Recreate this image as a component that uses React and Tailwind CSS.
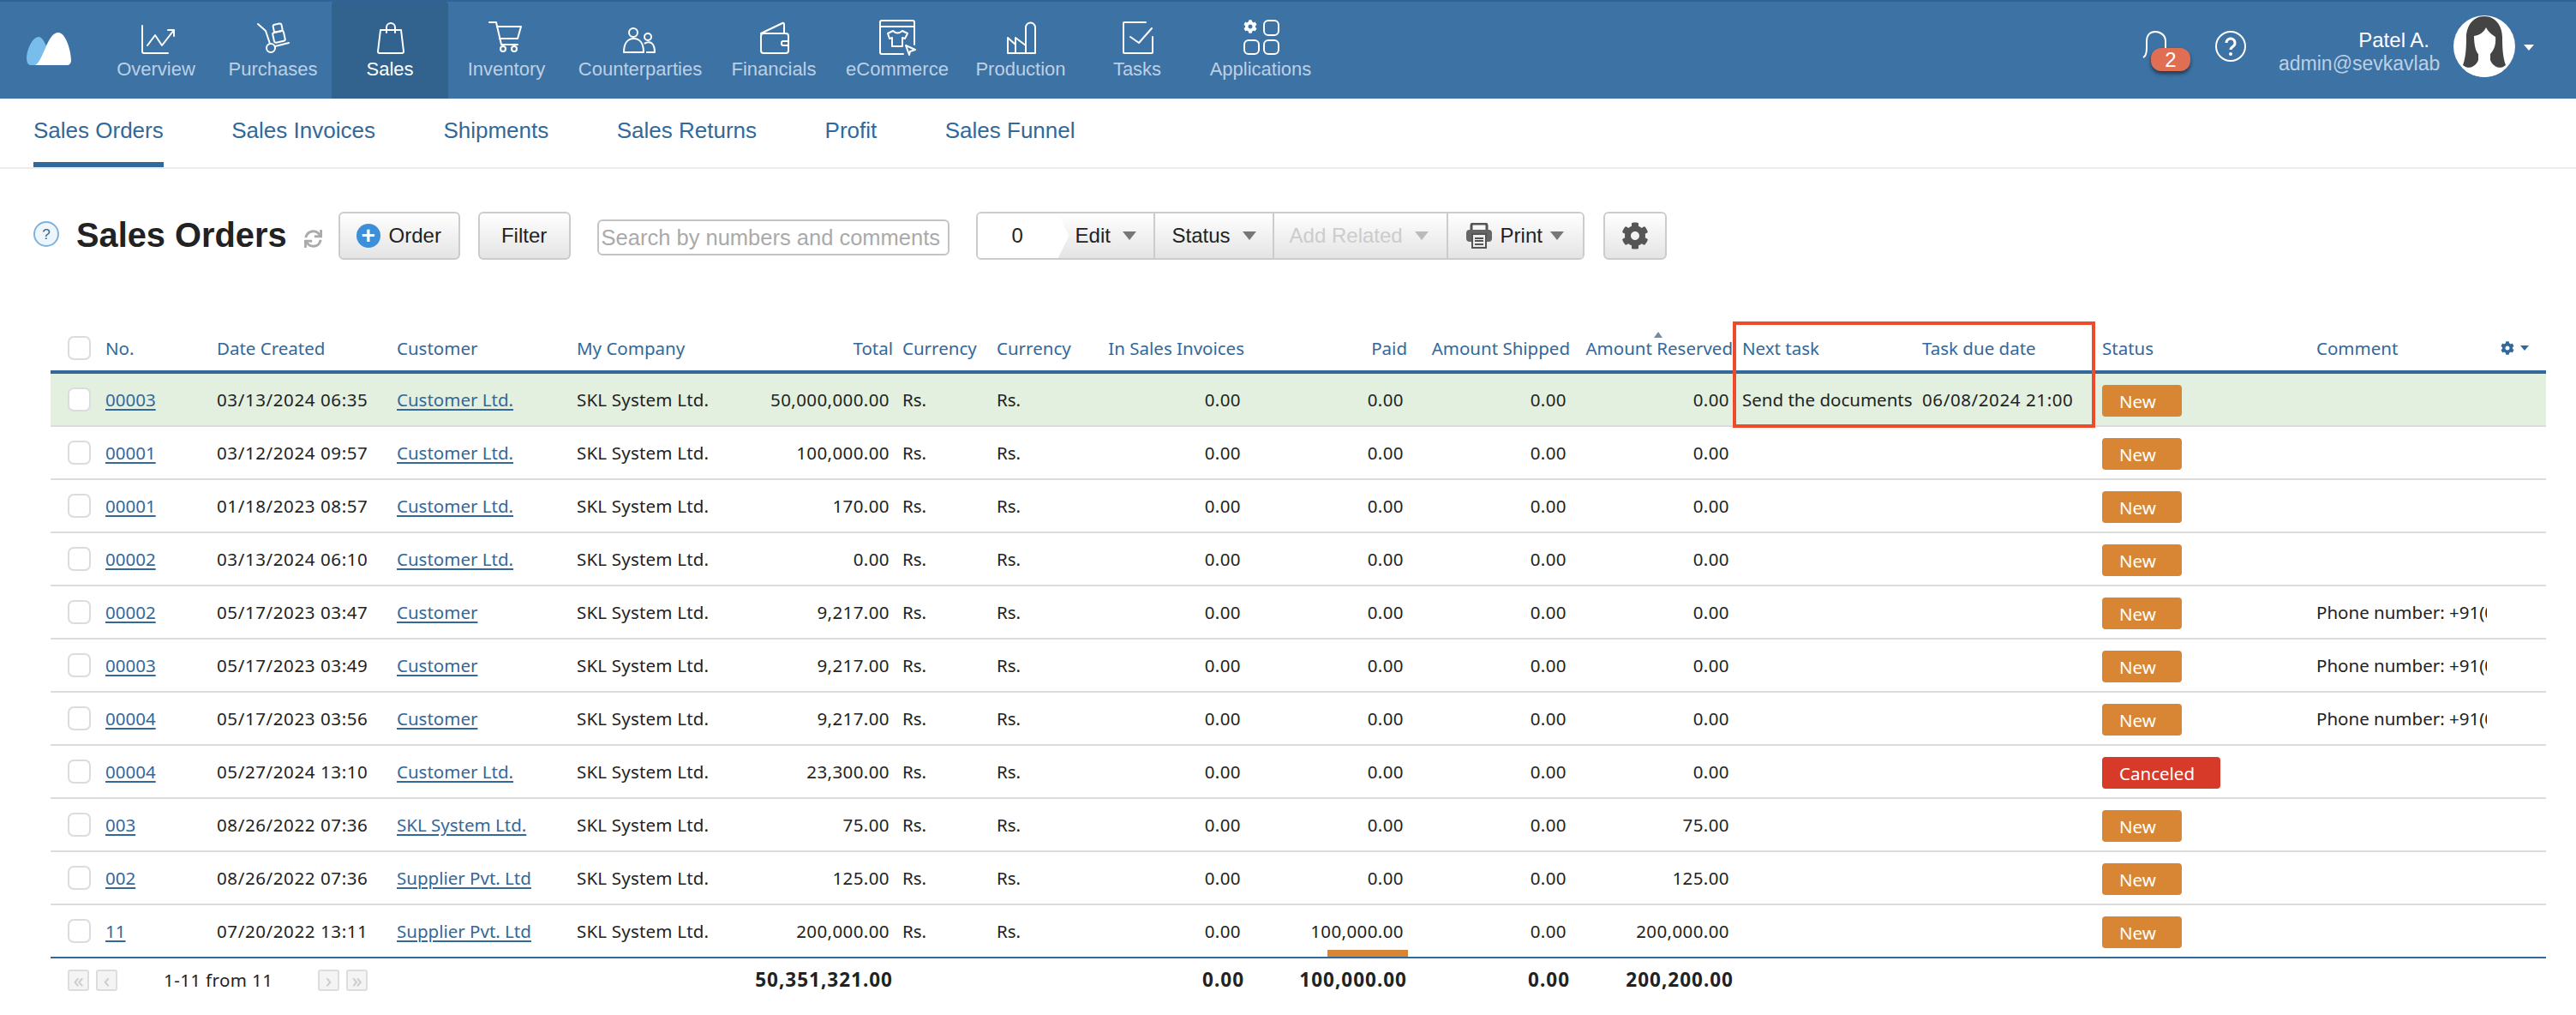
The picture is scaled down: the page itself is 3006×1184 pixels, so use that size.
import { FaCog, FaSync } from "react-icons/fa";

const ICON = "w-12 h-12 fill-none stroke-white stroke-2";

function OverviewIcon() {
  return (
    <svg viewBox="0 0 48 48" className={ICON} strokeLinecap="round" strokeLinejoin="round">
      <path d="M8 10V40q0 2 2 2H38" />
      <path d="M14 33L23 21L31 33L45 15M38 15H45V22" />
    </svg>
  );
}
function PurchasesIcon() {
  return (
    <svg viewBox="0 0 48 48" className={ICON} strokeLinecap="round" strokeLinejoin="round">
      <path d="M6 8L15 16L20 31M26 34L42 30" />
      <circle cx="21" cy="36" r="5" />
      <rect x="24" y="8" width="10" height="9" rx="2" transform="rotate(-12 29 12)" />
      <rect x="24" y="17" width="13" height="12" rx="2" transform="rotate(-12 30 23)" />
    </svg>
  );
}
function SalesIcon() {
  return (
    <svg viewBox="0 0 48 48" className={ICON} strokeLinecap="round" strokeLinejoin="round">
      <path d="M13 15H37L40 40q0 2-2 2H12q-2 0-2-2Z" />
      <path d="M20 18V12a5 5 0 0 1 10 0V18" />
    </svg>
  );
}
function InventoryIcon() {
  return (
    <svg viewBox="0 0 48 48" className={ICON} strokeLinecap="round" strokeLinejoin="round">
      <path d="M4 6H12L18 32H37" />
      <path d="M13 11H41L37 25H16" />
      <circle cx="20" cy="37" r="3" />
      <circle cx="33" cy="37" r="3" />
    </svg>
  );
}
function CounterpartiesIcon() {
  return (
    <svg viewBox="0 0 48 48" className={ICON} strokeLinejoin="round">
      <circle cx="16" cy="18" r="5" />
      <circle cx="33" cy="23" r="4" />
      <path d="M5 41C5 30 10 25 16.500 25C23 25 28 30 28 41Z" />
      <path d="M29 31C31 29 35 29 37 30C40 32 41 36 41 41H31" />
    </svg>
  );
}
function FinancialsIcon() {
  return (
    <svg viewBox="0 0 48 48" className={ICON} strokeLinecap="round" strokeLinejoin="round">
      <path d="M9 19L34 7q2-1 2 2V19" />
      <rect x="9" y="19" width="32" height="23" rx="3" />
      <path d="M41 28H35q-2 0-2 2v1q0 2 2 2H41" />
    </svg>
  );
}
function CommerceIcon() {
  return (
    <svg viewBox="0 0 48 48" className={ICON} strokeLinecap="round" strokeLinejoin="round">
      <path d="M31 43H6q-2 0-2-2V6q0-2 2-2H42q2 0 2 2V32M4 11H44" />
      <path d="M19 16L13 19L15 25L18 24V34H30V24L33 25L36 19L30 16Q24 21 19 16Z" />
      <path d="M34 33L45 38L39 40L38 44Z" />
    </svg>
  );
}
function ProductionIcon() {
  return (
    <svg viewBox="0 0 48 48" className={ICON} strokeLinejoin="round">
      <path d="M9 42V24L18 32V24L30 33V12a5.500 5.500 0 0 1 11 0V42Z" />
      <path d="M18 32V42M30 33V42" />
    </svg>
  );
}
function TasksIcon() {
  return (
    <svg viewBox="0 0 48 48" className={ICON} strokeLinecap="round" strokeLinejoin="round">
      <path d="M34 6H9q-1 0-1 1V41q0 1 1 1H41q1 0 1-1V23" />
      <path d="M16 23L26 30L41 13" />
    </svg>
  );
}
function ApplicationsIcon() {
  return (
    <svg viewBox="0 0 48 48" className={ICON}>
      <FaCog x="4" y="3" width="20" height="20" className="fill-white stroke-0" />
      <rect x="28" y="4" width="17" height="17" rx="5" />
      <rect x="5" y="27" width="17" height="16" rx="5" />
      <rect x="28" y="27" width="17" height="16" rx="5" />
    </svg>
  );
}

const NAV = [
  { label: "Overview", Icon: OverviewIcon, w: "w-[136px]" },
  { label: "Purchases", Icon: PurchasesIcon, w: "w-[137px]" },
  { label: "Sales", Icon: SalesIcon, w: "w-[136px]", active: true },
  { label: "Inventory", Icon: InventoryIcon, w: "w-[136px]" },
  { label: "Counterparties", Icon: CounterpartiesIcon, w: "w-[176px]" },
  { label: "Financials", Icon: FinancialsIcon, w: "w-[136px]" },
  { label: "eCommerce", Icon: CommerceIcon, w: "w-[152px]" },
  { label: "Production", Icon: ProductionIcon, w: "w-[136px]" },
  { label: "Tasks", Icon: TasksIcon, w: "w-[136px]" },
  { label: "Applications", Icon: ApplicationsIcon, w: "w-[152px]" },
];

const TABS = ["Sales Orders", "Sales Invoices", "Shipments", "Sales Returns", "Profit", "Sales Funnel"];

const PHONE = "Phone number: +91(000)0000000";
const ROWS = [
  { no: "00003", date: "03/13/2024 06:35", customer: "Customer Ltd.", total: "50,000,000.00", reserved: "0.00", task: "Send the documents", due: "06/08/2024 21:00", hot: true },
  { no: "00001", date: "03/12/2024 09:57", customer: "Customer Ltd.", total: "100,000.00", reserved: "0.00" },
  { no: "00001", date: "01/18/2023 08:57", customer: "Customer Ltd.", total: "170.00", reserved: "0.00" },
  { no: "00002", date: "03/13/2024 06:10", customer: "Customer Ltd.", total: "0.00", reserved: "0.00" },
  { no: "00002", date: "05/17/2023 03:47", customer: "Customer", total: "9,217.00", reserved: "0.00", comment: PHONE },
  { no: "00003", date: "05/17/2023 03:49", customer: "Customer", total: "9,217.00", reserved: "0.00", comment: PHONE },
  { no: "00004", date: "05/17/2023 03:56", customer: "Customer", total: "9,217.00", reserved: "0.00", comment: PHONE },
  { no: "00004", date: "05/27/2024 13:10", customer: "Customer Ltd.", total: "23,300.00", reserved: "0.00", canceled: true },
  { no: "003", date: "08/26/2022 07:36", customer: "SKL System Ltd.", total: "75.00", reserved: "75.00" },
  { no: "002", date: "08/26/2022 07:36", customer: "Supplier Pvt. Ltd", total: "125.00", reserved: "125.00" },
  { no: "11", date: "07/20/2022 13:11", customer: "Supplier Pvt. Ltd", total: "200,000.00", reserved: "200,000.00", paid: "100,000.00", last: true },
];

function Logo() {
  return (
    <svg viewBox="0 0 52 38" className="w-[52px] h-[38px]">
      <path d="M0 30C0 20 7 5 14 5C18 5 21 11 24 18C20 28 16 36 10 38H5C2 38 0 35 0 30Z" fill="#78bdec" />
      <path d="M10 38C20 33 24 0 37 0C46 0 52 22 52 32C52 36 50 38 47 38Z" fill="#fff" />
    </svg>
  );
}

function Caret({ className = "border-t-[#777]" }) {
  return <span className={`inline-block w-0 h-0 border-x-[8px] border-x-transparent border-t-[10px] ${className}`} />;
}

function Checkbox() {
  return <span className="block w-[27px] h-[28px] rounded-[7px] border-2 border-[#dcdcdc] bg-white" />;
}

function PagerBtn({ children }) {
  return (
    <span className="w-[25px] h-[25px] flex items-center justify-center rounded-[3px] border-2 border-[#ddd] bg-[#f4f4f4] text-[#ccc] text-[24px] leading-none">
      {children}
    </span>
  );
}

function Avatar() {
  return (
    <svg viewBox="0 0 72 72" className="w-[72px] h-[72px]">
      <clipPath id="avatar-clip"><circle cx="36" cy="36" r="36" /></clipPath>
      <g clipPath="url(#avatar-clip)">
        <rect width="72" height="72" fill="#fff" />
        <path d="M36 1C23 1 15 12 15 26C15 40 14 50 11 58C17 63 24 61 29 55H43C48 61 55 63 61 58C58 50 57 40 57 26C57 12 49 1 36 1Z" fill="#444" />
        <path d="M24 24C31 23 36 19 38 14C41 20 46 23 49 25C50 34 47 41 43 45V52C45 58 52 62 60 64V72H12V64C20 62 27 58 29 52V45C26 42 24 34 24 24Z" fill="#fff" />
      </g>
    </svg>
  );
}

function PrintIcon() {
  return (
    <svg viewBox="0 0 32 30" className="w-8 h-[30px]">
      <path d="M7 9V3q0-2 2-2H23q2 0 2 2V9" fill="none" stroke="#555" strokeWidth="3" />
      <rect x="1" y="8" width="30" height="14" rx="4" fill="#666" />
      <rect x="8" y="13" width="16" height="16" fill="#eee" stroke="#555" strokeWidth="2" />
      <path d="M11 18H21M11 21H21M11 25H21" stroke="#555" strokeWidth="2" />
    </svg>
  );
}

const COLS = [59, 130, 210, 210, 200, 180, 110, 126, 174, 190, 190, 190, 210, 210, 250, 204, 69];

function App() {
  const btn = "h-14 flex items-center rounded-[6px] border-2 border-[#ccc] bg-gradient-to-b from-white to-[#e4e4e4] text-[24px] text-[#222]";
  const segment = "h-full flex items-center gap-[14px] border-r-2 border-[#ccc] bg-gradient-to-b from-white to-[#e4e4e4]";
  const thBase = "h-14 border-b-4 border-[#32689a] font-normal whitespace-nowrap";
  const th = `${thBase} pl-[5px] text-left`;
  const thr = `${thBase} pr-[6px] text-right`;

  return (
    <div className="w-[3006px] h-[1184px] overflow-hidden bg-white font-['Liberation_Sans',sans-serif]">
      <header className="h-[115px] flex border-t-2 border-[#2f6596] bg-[#3d72a4] text-white">
        <div className="w-[114px] pl-[31px] pt-[36px] shrink-0"><Logo /></div>
        <nav className="flex">
          {NAV.map(({ label, Icon, w, active }) => (
            <a key={label} className={`${w} flex flex-col items-center pt-[18px] ${active ? "bg-[#32628e] rounded-t-[4px] text-white" : "text-[#bcd0e4]"}`}>
              <Icon />
              <span className="-mt-[2px] text-[22px] leading-[30px] whitespace-nowrap">{label}</span>
            </a>
          ))}
        </nav>
        <div className="ml-auto flex items-start">
          <div className="relative mt-[34px] w-[30px] h-[32px] -translate-x-[3px]">
            <svg viewBox="0 0 30 32" className="w-[30px] h-[32px] fill-none stroke-white stroke-2">
              <path d="M1 31Q5 29 5 20V12C5 5 9 1 15 1C21 1 27 5 27 12V31" />
            </svg>
            <span className="absolute left-[10px] top-5 w-[46px] h-[27px] flex items-center justify-center rounded-xl bg-[#df6e53] text-[24px] leading-none shadow-[0_3px_4px_rgba(0,0,0,0.5)]">2</span>
          </div>
          <svg viewBox="0 0 36 36" className="mt-[34px] ml-[52px] w-9 h-9 fill-none stroke-white stroke-2">
            <circle cx="18" cy="18" r="17" />
            <path d="M13 14a5 5 0 1 1 8 4q-3 2-3 4" strokeWidth="3" />
            <circle cx="18" cy="27" r="1" fill="#fff" />
          </svg>
          <div className="ml-[38px] mt-[31px] w-[176px] text-right">
            <div className="text-[24px] leading-7">Patel A.</div>
            <div className="text-[23px] leading-[26px] text-[#bcd0e4]">admin@sevkavlab</div>
          </div>
          <div className="ml-[28px] mt-4"><Avatar /></div>
          <span className="ml-[10px] mt-[50px] mr-[49px] w-0 h-0 border-x-[6px] border-x-transparent border-t-[7px] border-t-white" />
        </div>
      </header>

      <div className="h-[82px] flex gap-[79.500px] pl-[39px] border-b-2 border-[#ebebeb] text-[26px] text-[#32689a]">
        {TABS.map((t, i) => (
          <a key={t} className={`h-full flex items-center border-b-[6px] ${i === 0 ? "border-[#32689a]" : "border-transparent"}`}>{t}</a>
        ))}
      </div>

      <div className="flex items-center pl-[39px] mt-[50px] h-14">
        <svg viewBox="0 0 30 30" className="w-[30px] h-[30px] -mt-[4px] fill-[#eef6fc] stroke-[#7fb2dc] stroke-2">
          <circle cx="15" cy="15" r="14" />
          <text x="15" y="21" textAnchor="middle" className="fill-[#32689a] stroke-0 text-[17px]">?</text>
        </svg>
        <h1 className="ml-5 text-[39.800px] font-bold text-[#222]">Sales Orders</h1>
        <FaSync className="ml-[20px] mt-[6px] w-[21px] h-[21px] text-[#aaa]" />
        <button className={`${btn} ml-[19px] w-[142px] pl-[19px] gap-[10px]`}>
          <span className="w-7 h-7 flex items-center justify-center rounded-full bg-[#3d8fd9] text-white text-[28px] font-bold leading-none">+</span>
          Order
        </button>
        <button className={`${btn} ml-[21px] w-[108px] justify-center`}>Filter</button>
        <div className="ml-[31px] w-[411px] h-[42px] mt-[4px] flex items-center pl-[3px] rounded-[6px] border-2 border-[#c4c4c4] bg-white text-[25.500px] text-[#aaa] whitespace-nowrap overflow-hidden">
          Search by numbers and comments
        </div>
        <div className="ml-[31px] w-[710px] h-14 flex rounded-[6px] border-2 border-[#ccc] overflow-hidden text-[24px] text-[#222]">
          <div className="relative w-[107px] h-full bg-gradient-to-b from-white to-[#e4e4e4]">
            <span className="absolute inset-0 flex items-center justify-center pr-[14px] bg-white [clip-path:polygon(0_0,88%_0,100%_50%,88%_100%,0_100%)]">0</span>
          </div>
          <div className={`${segment} w-[100px] pl-[7px]`}>Edit<Caret /></div>
          <div className={`${segment} w-[139px] pl-5`}>Status<Caret /></div>
          <div className={`${segment} w-[203px] pl-[18px] text-[#ccc]`}>Add Related<Caret className="border-t-[#bbb]" /></div>
          <div className="flex-1 h-full flex items-center pl-5 gap-[9px] bg-gradient-to-b from-white to-[#e4e4e4]"><PrintIcon />Print<Caret /></div>
        </div>
        <button className={`${btn} ml-[22px] w-[74px] justify-center`}>
          <FaCog className="w-8 h-8 text-[#555]" />
        </button>
      </div>

      <div className="relative mt-[77px] ml-[59px] w-[2912px] font-['Noto_Sans',sans-serif] text-[20.500px] text-[#222]">
        <table className="w-full table-fixed border-separate border-spacing-0">
          <colgroup>
            {COLS.map((c, i) => <col key={i} style={{ width: c }} />)}
          </colgroup>
          <thead className="text-[#32689a]">
            <tr>
              <th className={`${thBase} pl-5 text-left`}><Checkbox /></th>
              <th className={th}>No.</th>
              <th className={th}>Date Created</th>
              <th className={th}>Customer</th>
              <th className={th}>My Company</th>
              <th className={thr}>Total</th>
              <th className={th}>Currency</th>
              <th className={th}>Currency</th>
              <th className={thr}>In Sales Invoices</th>
              <th className={thr}>Paid</th>
              <th className={thr}>Amount Shipped</th>
              <th className={thr}>Amount Reserved</th>
              <th className={th}>Next task</th>
              <th className={th}>Task due date</th>
              <th className={th}>Status</th>
              <th className={th}>Comment</th>
              <th className={`${thBase} pl-[16px] text-left`}>
                <span className="flex items-center gap-[7px]">
                  <FaCog className="w-4 h-4 text-[#32689a]" />
                  <span className="w-0 h-0 border-x-[5px] border-x-transparent border-t-[6px] border-t-[#32689a]" />
                </span>
              </th>
            </tr>
          </thead>
          <tbody>
            {ROWS.map((r, i) => {
              const td = `h-[62px] border-b-2 whitespace-nowrap ${r.last ? "border-[#32689a]" : "border-[#dcdcdc]"} ${r.hot ? "bg-[#e3f0e0]" : ""}`;
              const tl = `${td} pl-[5px]`;
              const tr = `${td} pr-[10px] text-right tracking-[0.4px]`;
              const link = "text-[#32689a] underline decoration-2 underline-offset-[3px]";
              return (
                <tr key={i}>
                  <td className={`${td} pl-5`}><Checkbox /></td>
                  <td className={tl}><a className={link}>{r.no}</a></td>
                  <td className={`${tl} tracking-[0.6px]`}>{r.date}</td>
                  <td className={tl}><a className={link}>{r.customer}</a></td>
                  <td className={`${tl} tracking-[0.2px]`}>SKL System Ltd.</td>
                  <td className={tr}>{r.total}</td>
                  <td className={tl}>Rs.</td>
                  <td className={tl}>Rs.</td>
                  <td className={tr}>0.00</td>
                  <td className={`${tr} relative`}>
                    {r.paid || "0.00"}
                    {r.paid && <span className="absolute right-[5px] bottom-0 w-[94px] h-2 bg-[#d98634]" />}
                  </td>
                  <td className={tr}>0.00</td>
                  <td className={tr}>{r.reserved}</td>
                  <td className={tl}>{r.task}</td>
                  <td className={`${tl} tracking-[0.6px]`}>{r.due}</td>
                  <td className={tl}>
                    <span className={`block h-[37px] mt-[2px] rounded-[4px] pl-5 leading-[39px] text-white ${r.canceled ? "w-[138px] bg-[#d83a2a]" : "w-[93px] bg-[#d98634]"}`}>
                      {r.canceled ? "Canceled" : "New"}
                    </span>
                  </td>
                  <td className={`${tl} overflow-hidden`}>{r.comment}</td>
                  <td className={td} />
                </tr>
              );
            })}
          </tbody>
          <tfoot className="font-bold text-[22.500px] tracking-[1px]">
            <tr>
              <td colSpan={5} className="h-[50px] pl-5">
                <div className="flex items-center font-normal text-[20.500px] tracking-normal">
                  <span className="flex gap-2"><PagerBtn>«</PagerBtn><PagerBtn>‹</PagerBtn></span>
                  <span className="ml-[54px] w-[180px] tracking-[0.4px]">1-11 from 11</span>
                  <span className="flex gap-2"><PagerBtn>›</PagerBtn><PagerBtn>»</PagerBtn></span>
                </div>
              </td>
              <td className="pr-[6px] text-right">50,351,321.00</td>
              <td colSpan={2} />
              <td className="pr-[6px] text-right">0.00</td>
              <td className="pr-[6px] text-right">100,000.00</td>
              <td className="pr-[6px] text-right">0.00</td>
              <td className="pr-[5px] text-right">200,200.00</td>
              <td colSpan={5} />
            </tr>
          </tfoot>
        </table>
        <span className="absolute left-[1871px] top-[7px] w-0 h-0 border-x-[5px] border-x-transparent border-b-[7px] border-b-[#778ba0]" />
        <div className="absolute left-[1963px] -top-[5px] w-[423px] h-[124px] border-4 border-[#ee4a2c]" />
      </div>
    </div>
  );
}

export default App;
